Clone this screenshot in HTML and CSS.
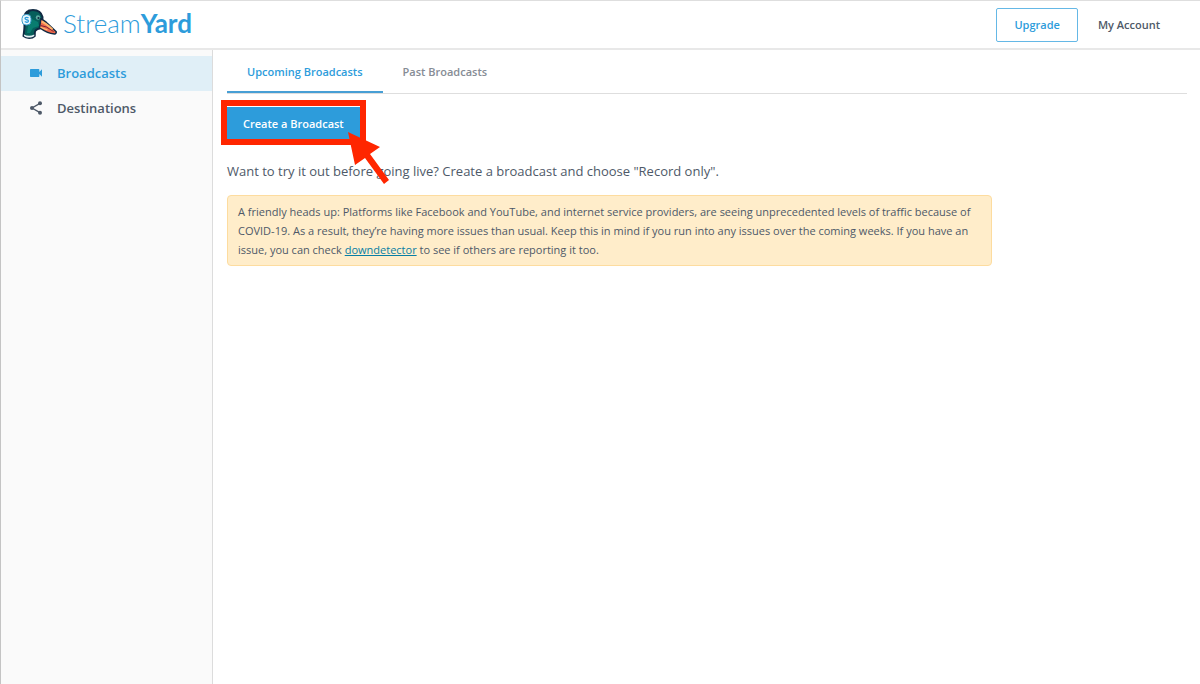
FILE: index.html
```html
<!DOCTYPE html>
<html lang="en">
<head>
    <meta charset="UTF-8">
    <meta name="viewport" content="width=device-width, initial-scale=1.0">
    <title>StreamYard</title>
    <link rel="stylesheet" href="styles.css">
</head>
<body>
    <div class="page">
        <header class="header">
            <a class="logo" href="#">
                <svg class="logo-duck" viewBox="0 0 36 30" aria-hidden="true">
                    <!-- head and neck -->
                    <path d="M3 8C4 3 7.500 1 12 1c5.500 0 8.500 3 9.500 7l-.5 11c-2.500.6-5 .8-6.500 2.500-1.200 1.500-.5 3.500-.8 5.500-2.500 2.500-8.500 2.500-11.200 0C3 23 3.500 20 3.500 17z" fill="#065f5b" stroke="#102a43" stroke-width="2" stroke-linejoin="round"/>
                    <path d="M11 10l6 3 1 4-6 2-3 5H6l1-7z" fill="#087d70"/>
                    <path d="M3 25.500c3 1.700 7 1.700 10.300 0v1.500c-3 2-7.500 2-10.300 0z" fill="#e3f1f4"/>
                    <!-- beak -->
                    <path d="M20 9.500c2 2 4 2.500 6 4.500l9 8.500c.6 1-.2 2.500-1.500 2.500-5-.3-10-2.500-15-6.500z" fill="#f1694a" stroke="#102a43" stroke-width="1.500" stroke-linejoin="round"/>
                    <path d="M20.500 12.500c3 1 5 2.500 11 8" fill="none" stroke="#ffb36b" stroke-width="2"/>
                    <path d="M19.500 16.500l6 1.500 7 4.500" fill="none" stroke="#7c2338" stroke-width="1"/>
                    <path d="M19.500 18.300l7 2.700" stroke="#ffc27a" stroke-width="1.200"/>
                    <!-- eye -->
                    <circle cx="17" cy="8.500" r="2.200" fill="#5eaaa0"/>
                    <circle cx="17.500" cy="9" r="1.100" fill="#102a43"/>
                    <!-- headphone -->
                    <path d="M6.500 5l2-4" stroke="#102a43" stroke-width="2"/>
                    <rect x="1" y="5.500" width="9" height="10.500" rx="4" fill="#e9f8fd" stroke="#3a9bc8"/>
                    <path d="M7.500 9c-1-1-3.500-.8-3.500.6s3.500.9 3.500 2.400-2.500 1.600-3.700.6" fill="none" stroke="#2d9cdb" stroke-width="1.300"/>
                </svg>
                <span class="logo-text">Stream<b>Yard</b></span>
            </a>
            <div class="header-actions">
                <button type="button" class="upgrade">Upgrade</button>
                <a class="account" href="#">My Account</a>
            </div>
        </header>

        <div class="content">
            <nav class="sidebar">
                <a class="side-item active" href="#">
                    <svg class="side-icon" viewBox="0 0 24 24" aria-hidden="true"><path d="M17 10.500V7c0-.6-.4-1-1-1H4c-.6 0-1 .4-1 1v10c0 .6.400 1 1 1h12c.6 0 1-.4 1-1v-3.500l4 4v-11z" fill="currentColor"/></svg>
                    Broadcasts
                </a>
                <a class="side-item" href="#">
                    <svg class="side-icon" viewBox="0 0 24 24" aria-hidden="true">
                        <path d="M18 5L6 12l12 7" fill="none" stroke="currentColor" stroke-width="2"/>
                        <circle cx="18" cy="5" r="3" fill="currentColor"/>
                        <circle cx="6" cy="12" r="3" fill="currentColor"/>
                        <circle cx="18" cy="19" r="3" fill="currentColor"/>
                    </svg>
                    Destinations
                </a>
            </nav>

            <main class="main">
                <div class="tabs">
                    <a class="tab active" href="#">Upcoming Broadcasts</a>
                    <a class="tab" href="#">Past Broadcasts</a>
                </div>

                <div class="create-wrap">
                    <button type="button" class="create">Create a Broadcast</button>
                    <svg class="arrow" viewBox="0 0 44 54" aria-hidden="true"><path d="M1 1l32 15-10 7 19 26-5 4-19-26-10 7z" fill="#ff2600"/></svg>
                </div>

                <p class="hint">Want to try it out before going live? Create a broadcast and choose "Record only".</p>

                <div class="notice">
                    A friendly heads up: Platforms like Facebook and YouTube, and internet service providers, are seeing unprecedented levels of traffic because of COVID-19. As a result, they’re having more issues than usual. Keep this in mind if you run into any issues over the coming weeks. If you have an issue, you can check <a href="#">downdetector</a> to see if others are reporting it too.
                </div>
            </main>
        </div>
    </div>
</body>
</html>
```
FILE: styles.css
```css
* {
    box-sizing: border-box;
}

body {
    margin: 0;
    font-family: "Open Sans", "Noto Sans", sans-serif;
    font-size: 13px;
    color: #4e5968;
    background-color: #fff;
}

a {
    color: inherit;
    text-decoration: none;
}

button {
    font-family: inherit;
    cursor: pointer;
}

.page {
    display: flex;
    flex-direction: column;
    min-height: 100vh;
    border-top: 1px solid #dedede;
    border-left: 1px solid #c4c4c4;
}

/* header */
.header {
    display: flex;
    justify-content: space-between;
    align-items: center;
    height: 49px;
    padding: 0 40px 0 20px;
    border-bottom: 2px solid #e8e8e8;
}

.logo {
    display: flex;
    align-items: center;
    gap: 6px;
    padding-bottom: 2px;
}

.logo-duck {
    width: 36px;
    height: 30px;
}

.logo-text {
    font-family: Lato, sans-serif;
    font-size: 26px;
    font-weight: 300;
    line-height: 28px;
    padding-bottom: 2px;
    color: #2d9cdb;
}

.logo-text b {
    font-weight: 700;
}

.header-actions {
    display: flex;
    align-items: center;
    gap: 20px;
    font-size: 11px;
    font-weight: 600;
}

.upgrade {
    height: 34px;
    padding: 0 17px;
    border: 1px solid #65b8e6;
    border-radius: 2px;
    background-color: #fff;
    color: #2d9cdb;
    font-size: 11px;
    font-weight: 600;
}

/* sidebar */
.content {
    display: flex;
    flex: 1;
}

.sidebar {
    flex: none;
    width: 212px;
    padding-top: 6px;
    border-right: 1px solid #dcdcdc;
    background-color: #fafafa;
}

.side-item {
    display: flex;
    align-items: center;
    gap: 13px;
    height: 35px;
    padding: 0 0 2px 27px;
    font-weight: 600;
}

.side-item.active {
    background-color: #e0eff7;
    color: #2d9cdb;
}

.side-icon {
    width: 16px;
    height: 16px;
}

/* main */
.main {
    flex: 1;
    padding: 0 13px 0 14px;
}

.tabs {
    display: flex;
    height: 44px;
    border-bottom: 1px solid #dedede;
}

.tab {
    height: 43px;
    padding: 0 20px;
    line-height: 44px;
    font-size: 11px;
    font-weight: 600;
    color: #868c95;
}

.tab.active {
    border-bottom: 2px solid #479fd5;
    color: #2d9cdb;
}

/* red frame around the button */
.create-wrap {
    position: relative;
    width: fit-content;
    margin: 6px 0 0 -6px;
    padding-top: 1px;
    border: 6px solid #ff2600;
}

.create {
    display: block;
    height: 32px;
    padding: 1px 16px 0;
    border: 0;
    background-color: #2d9cdb;
    color: #fff;
    font-size: 11px;
    font-weight: 600;
}

.arrow {
    position: absolute;
    top: 25px;
    left: 120px;
    width: 44px;
    height: 54px;
}

.hint {
    margin: 16px 0 14px;
    line-height: 20px;
}

.notice {
    max-width: 765px;
    padding: 6px 10px;
    border: 1px solid #fddc9f;
    border-radius: 4px;
    background-color: #ffedca;
    font-size: 11px;
    line-height: 19px;
}

.notice a {
    color: #087ea4;
    text-decoration: underline;
}
```
